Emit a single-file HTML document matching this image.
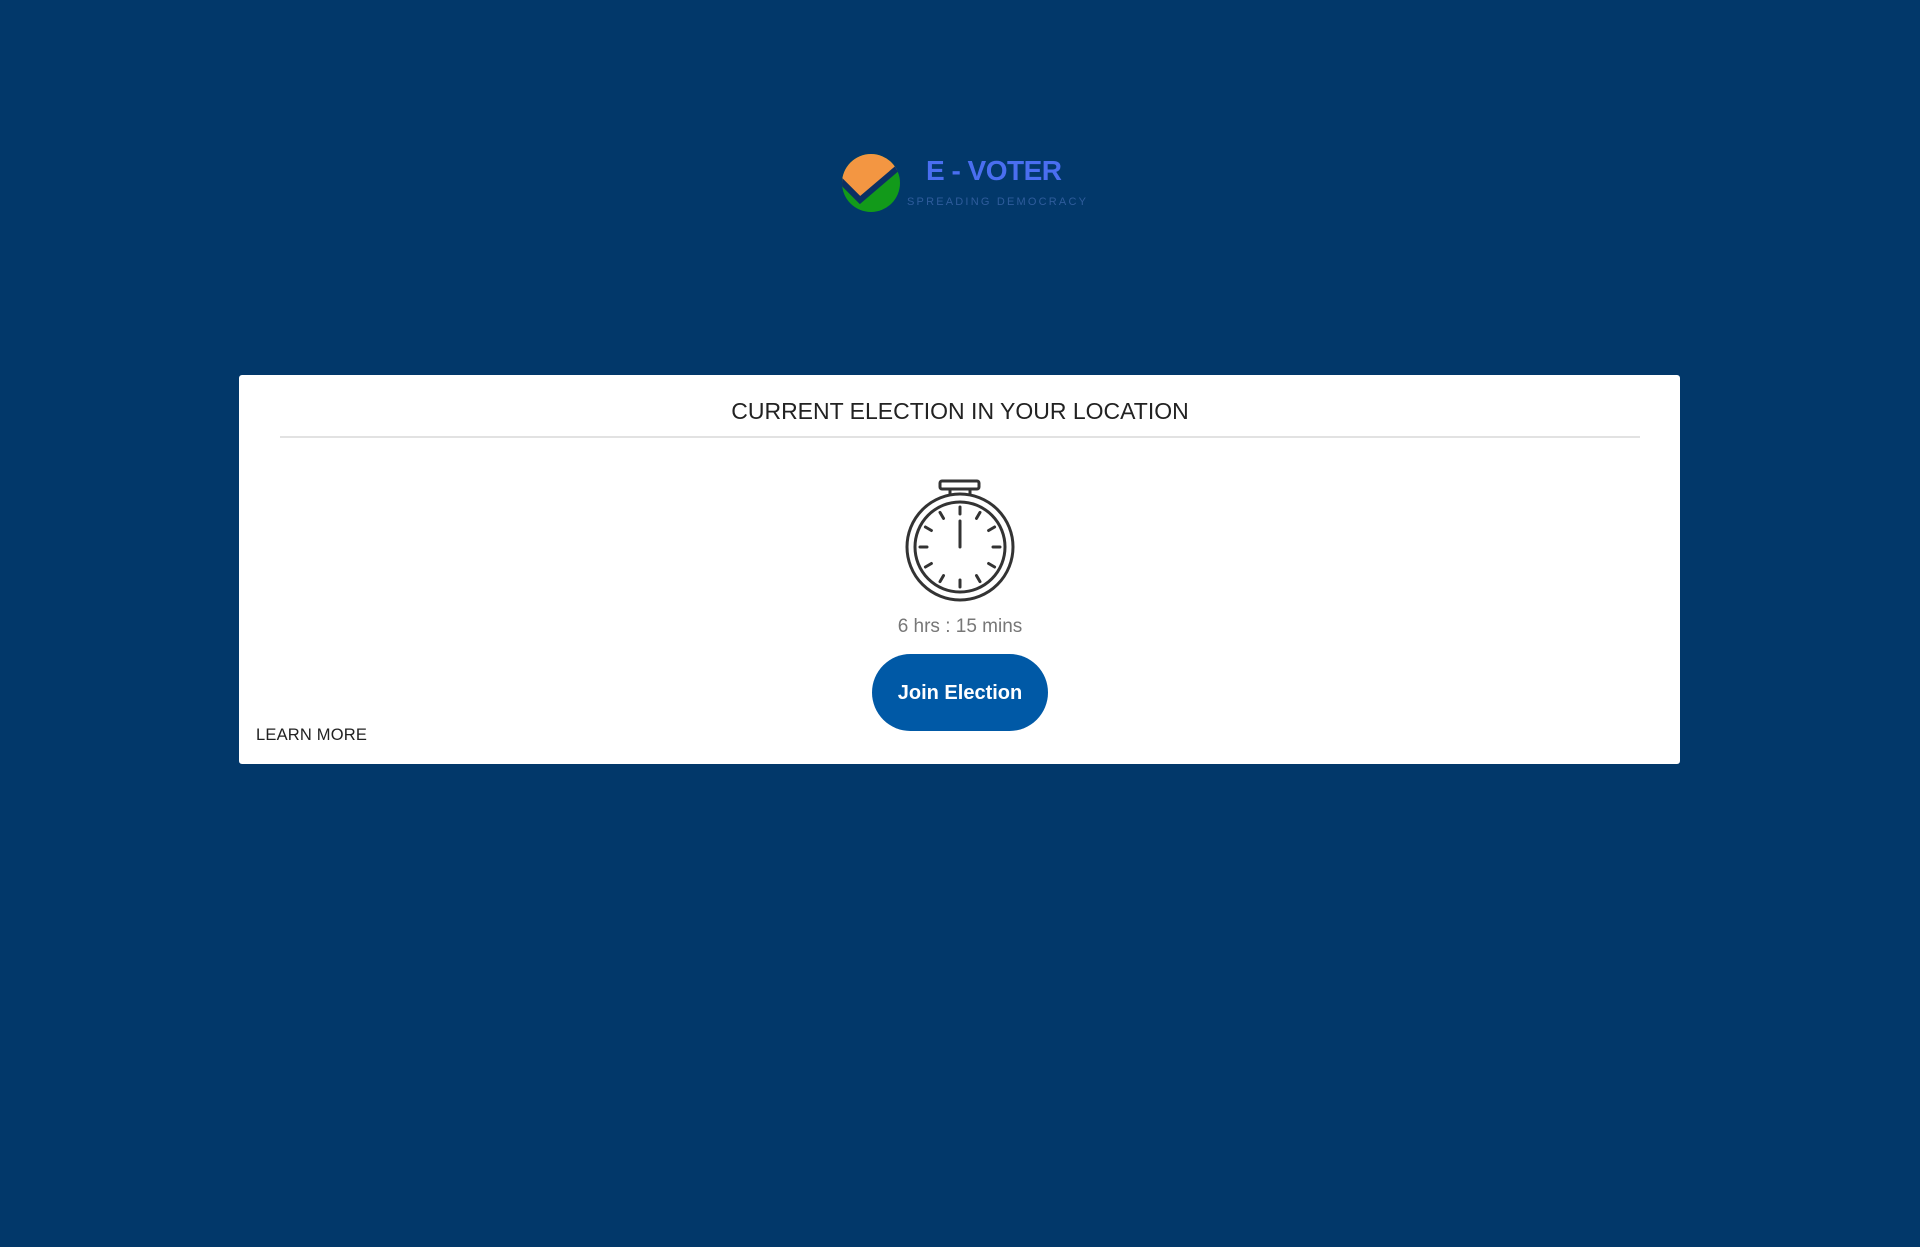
<!DOCTYPE html>
<html><head><meta charset="utf-8"><style>
html,body{margin:0;padding:0;width:1920px;height:1247px;background:#02386a;font-family:"Liberation Sans",Arial,sans-serif;overflow:hidden;position:relative}
.card{position:absolute;left:239px;top:375px;width:1441px;height:389px;background:#fff;border-radius:3px}
.title{position:absolute;left:0;width:100%;top:396px;text-align:center;font-size:23px;color:#222;line-height:30px}
.hr{position:absolute;left:280px;width:1360px;top:436px;height:2px;background:#e2e2e2}
.time{position:absolute;left:0;width:100%;top:615px;text-align:center;font-size:19px;color:#777;line-height:24px}
.btn{position:absolute;left:872px;top:654px;width:176px;height:77px;border-radius:39px;background:#0059a6;color:#fff;font-weight:bold;font-size:20px;text-align:center;line-height:78px}
.lm{position:absolute;left:256px;top:726px;font-size:16.5px;color:#222;letter-spacing:.2px}
.logo1{position:absolute;left:926px;top:153px;font-size:28px;font-weight:bold;color:#4a6ef0;line-height:36px;letter-spacing:-.5px}
.logo2{position:absolute;left:907px;top:196px;font-size:11px;color:#2f5c9c;letter-spacing:2.2px;line-height:12px}
</style></head><body>
<svg style="position:absolute;left:836px;top:148px" width="70" height="70" viewBox="836 148 70 70">
<defs><clipPath id="c"><circle cx="871" cy="183" r="29"/></clipPath></defs>
<g clip-path="url(#c)">
<rect x="836" y="148" width="70" height="70" fill="#129a1a"/>
<polygon points="836,148 906,148 906,163 860,198 836,178" fill="#f39642"/>
<polyline points="840,180 860,200 900,166" fill="none" stroke="#0b2f63" stroke-width="6"/>
</g>
</svg>
<div class="logo1">E - VOTER</div>
<div class="logo2">SPREADING DEMOCRACY</div>
<div class="card"></div>
<div class="title">CURRENT ELECTION IN YOUR LOCATION</div>
<div class="hr"></div>
<svg style="position:absolute;left:895px;top:475px" width="130" height="130" viewBox="895 475 130 130">
<rect x="940" y="481" width="39" height="8" rx="2" fill="none" stroke="#333" stroke-width="3"/>
<line x1="950" y1="489" x2="950" y2="494" stroke="#333" stroke-width="3"/>
<line x1="970" y1="489" x2="970" y2="494" stroke="#333" stroke-width="3"/>
<circle cx="960" cy="547" r="53" fill="none" stroke="#333" stroke-width="3"/>
<circle cx="960" cy="547" r="45" fill="none" stroke="#333" stroke-width="3"/>
<g stroke="#333" stroke-width="3" stroke-linecap="round">
<line x1="960" y1="521" x2="960" y2="547"/>
<line x1="960" y1="507" x2="960" y2="514"/>
<line x1="960" y1="580" x2="960" y2="587"/>
<line x1="920" y1="547" x2="927" y2="547"/>
<line x1="993" y1="547" x2="1000" y2="547"/>
<line x1="940" y1="512.4" x2="943.5" y2="518.4"/>
<line x1="980" y1="512.4" x2="976.5" y2="518.4"/>
<line x1="940" y1="581.6" x2="943.5" y2="575.6"/>
<line x1="980" y1="581.6" x2="976.5" y2="575.6"/>
<line x1="925.4" y1="527" x2="931.4" y2="530.5"/>
<line x1="994.6" y1="527" x2="988.6" y2="530.5"/>
<line x1="925.4" y1="567" x2="931.4" y2="563.5"/>
<line x1="994.6" y1="567" x2="988.6" y2="563.5"/>
</g>
</svg>
<div class="time">6 hrs : 15 mins</div>
<div class="btn">Join Election</div>
<div class="lm">LEARN MORE</div>
</body></html>
